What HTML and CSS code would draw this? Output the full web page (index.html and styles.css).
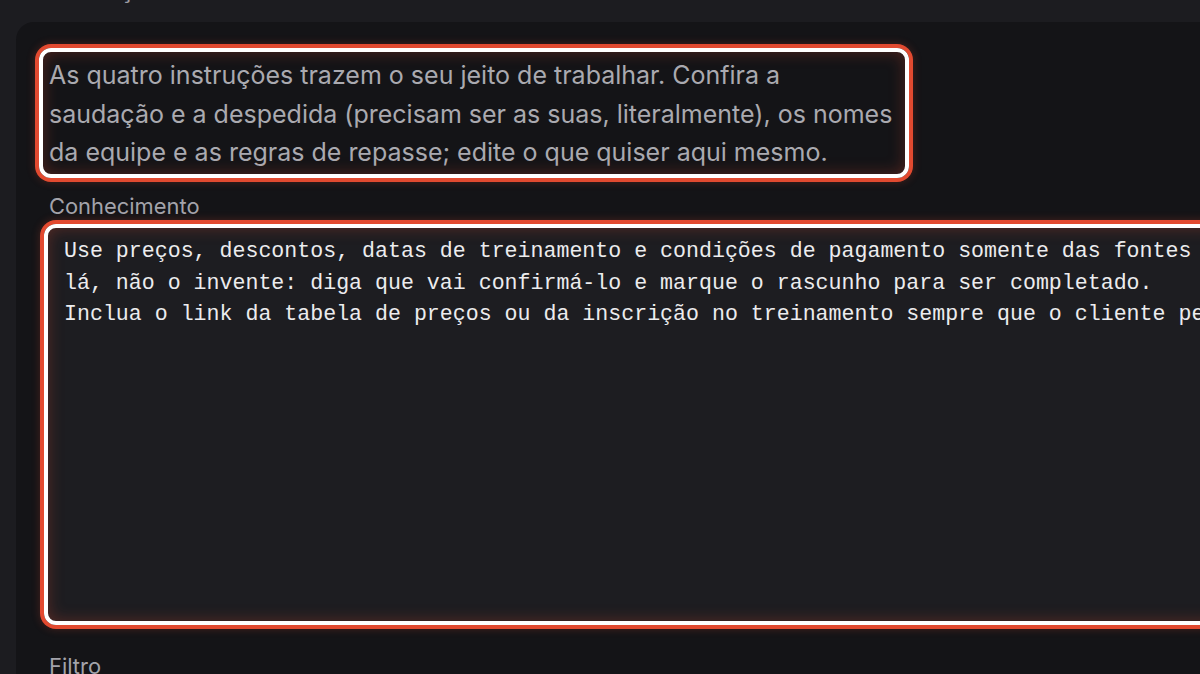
FILE: index.html
```html
<!DOCTYPE html>
<html lang="pt-BR">
<head>
<meta charset="utf-8">
<title>Instruções</title>
<link rel="stylesheet" href="styles.css">
</head>
<body>
  <div class="page">
    <div class="top-label">Instruções</div>
    <section class="card">
      <p class="intro hl">As quatro instruções trazem o seu jeito de trabalhar. Confira a<br>saudação e a despedida (precisam ser as suas, literalmente), os nomes<br>da equipe e as regras de repasse; edite o que quiser aqui mesmo.</p>
      <label class="field-label">Conhecimento</label>
      <div class="editor hl2">
        <div class="editor-text">Use preços, descontos, datas de treinamento e condições de pagamento somente das fontes abaixo. Se um dado não estiver
lá, não o invente: diga que vai confirmá-lo e marque o rascunho para ser completado.
Inclua o link da tabela de preços ou da inscrição no treinamento sempre que o cliente pedir.</div>
      </div>
      <label class="field-label filter">Filtro</label>
    </section>
  </div>
</body>
</html>
```
FILE: styles.css
```css
* { box-sizing: border-box; }
html, body {
  margin: 0;
  padding: 0;
  background: #1c1c20;
  width: 1200px;
  height: 674px;
  overflow: hidden;
  font-family: Inter, "Noto Sans", sans-serif;
}
.page {
  padding-left: 16px;
}
.top-label {
  padding-left: 33px;
  font-size: 26px;
  line-height: 26px;
  color: #9c9ca3;
  margin-top: -24px;
  height: 46px;
}
.card {
  background: #141417;
  border-radius: 18px 0 0 0;
  padding: 34px 0 0 33px;
  height: 700px;
}
.hl, .hl2 {
  position: relative;
}
.hl::after, .hl2::after {
  content: "";
  position: absolute;
  border-radius: 12px;
  border: 4px solid #ffffff;
  box-shadow: 0 0 0 4px #e24a30, 0 0 8px 4px rgba(226, 74, 48, 0.25), inset 0 0 16px rgba(226, 74, 48, 0.3);
  pointer-events: none;
}
.intro {
  margin: 0;
  width: 860px;
  font-size: 25px;
  line-height: 38.5px;
  color: #aaaab0;
  white-space: nowrap;
}
.intro::after {
  top: -8px;
  bottom: -6.5px;
  left: -10px;
  right: 0;
}
.field-label {
  display: block;
  margin-top: 20.5px;
  font-size: 21.9px;
  line-height: 28px;
  color: #a3a3aa;
}
.editor {
  margin-top: 8px;
  margin-left: -1px;
  width: 1200px;
  height: 393px;
  background: #1d1d21;
  border-radius: 8px;
  padding: 8px 0 0 16px;
}
.editor::after {
  top: -4px;
  bottom: -4px;
  left: -4px;
  right: -4px;
}
.editor-text {
  font-family: "Liberation Mono", "DejaVu Sans Mono", monospace;
  font-size: 21.6px;
  line-height: 31.5px;
  color: #ececee;
  white-space: pre;
  overflow: hidden;
}
.filter {
  margin-top: 31px;
}
```
